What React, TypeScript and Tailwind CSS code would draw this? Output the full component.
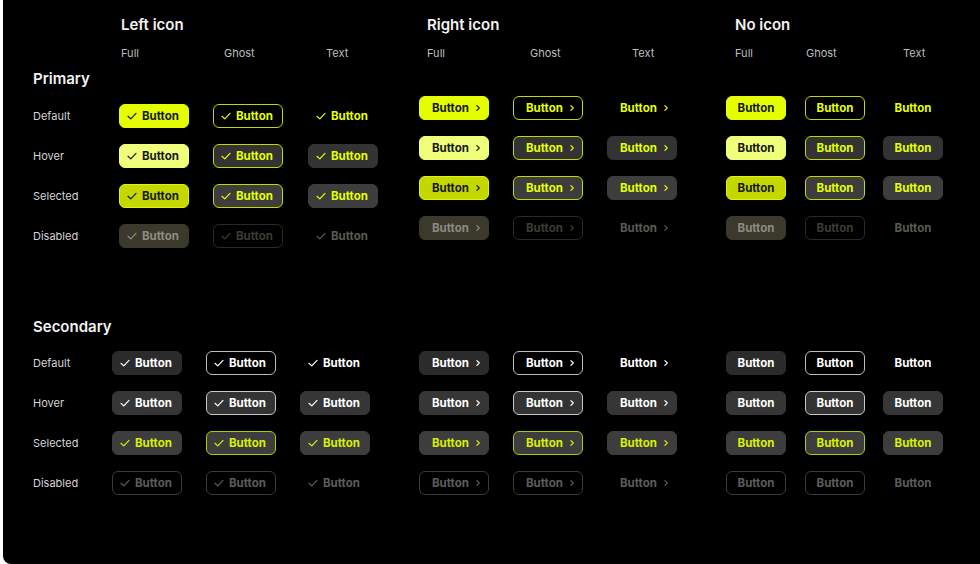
import React from 'react';

type Kind = 'primary' | 'secondary';
type Variant = 'full' | 'ghost' | 'text';
type State = 'default' | 'hover' | 'selected' | 'disabled';
type Icon = 'left' | 'right' | 'none';

const styles: Record<string, string> = {
  'primary-full-default': 'bg-[#e5ff00] border-[#e5ff00] text-[#161616]',
  'primary-full-hover': 'bg-[#f0ff7a] border-[#f0ff7a] text-[#161616]',
  'primary-full-selected': 'bg-[#c4d800] border-[#e0f500] text-[#161616]',
  'primary-full-disabled': 'bg-[#3a392b] border-[#3a392b] text-[#8c8c82]',
  'primary-ghost-default': 'bg-black border-[#c6d600] text-[#e5ff00]',
  'primary-ghost-hover': 'bg-[#333333] border-[#c6d600] text-[#e5ff00]',
  'primary-ghost-selected': 'bg-[#3d3d3d] border-[#c6d600] text-[#e5ff00]',
  'primary-ghost-disabled': 'bg-black border-[#2a2a1e] text-[#3c3c31]',
  'primary-text-default': 'bg-transparent border-transparent text-[#e5ff00]',
  'primary-text-hover': 'bg-[#333333] border-[#333333] text-[#e5ff00]',
  'primary-text-selected': 'bg-[#3d3d3d] border-[#3d3d3d] text-[#e5ff00]',
  'primary-text-disabled': 'bg-transparent border-transparent text-[#5a5a52]',
  'secondary-full-default': 'bg-[#2b2b2b] border-[#2b2b2b] text-white',
  'secondary-full-hover': 'bg-[#363636] border-[#363636] text-white',
  'secondary-full-selected': 'bg-[#3d3d3d] border-[#3d3d3d] text-[#d9f000]',
  'secondary-full-disabled': 'bg-black border-[#3a3a3a] text-[#5c5c5c]',
  'secondary-ghost-default': 'bg-black border-[#bdbdbd] text-white',
  'secondary-ghost-hover': 'bg-[#333333] border-[#c8c8c8] text-white',
  'secondary-ghost-selected': 'bg-[#3d3d3d] border-[#b4c800] text-[#d9f000]',
  'secondary-ghost-disabled': 'bg-black border-[#3a3a3a] text-[#5c5c5c]',
  'secondary-text-default': 'bg-transparent border-transparent text-white',
  'secondary-text-hover': 'bg-[#363636] border-[#363636] text-white',
  'secondary-text-selected': 'bg-[#3d3d3d] border-[#3d3d3d] text-[#d9f000]',
  'secondary-text-disabled': 'bg-transparent border-transparent text-[#5c5c5c]',
};

const Check = () => (
  <svg width="10" height="10" viewBox="0 0 10 10" fill="none" className="shrink-0">
    <path d="M1 5.3 L3.8 7.9 L9 2.4" stroke="currentColor" strokeWidth="1.2" strokeLinecap="round" strokeLinejoin="round" />
  </svg>
);

const Chevron = () => (
  <svg width="8" height="8" viewBox="0 0 10 10" fill="none" className="shrink-0">
    <path d="M3.6 2 L6.6 5 L3.6 8" stroke="currentColor" strokeWidth="1.5" strokeLinecap="round" strokeLinejoin="round" />
  </svg>
);

function Btn({ kind, variant, state, icon }: { kind: Kind; variant: Variant; state: State; icon: Icon }) {
  const layout =
    icon === 'none'
      ? 'w-[60px] justify-center'
      : icon === 'left'
        ? 'w-[70px] justify-start gap-[5px] pl-[7px]'
        : 'w-[70px] justify-start gap-[5px] pl-[12px]';
  return (
    <div className={`flex h-6 ${layout} shrink-0 items-center rounded-[6px] border text-[11.5px] font-bold leading-none ${styles[`${kind}-${variant}-${state}`]}`}>
      {icon === 'left' && <Check />}
      <span className="pt-px">Button</span>
      {icon === 'right' && <Chevron />}
    </div>
  );
}

const states: State[] = ['default', 'hover', 'selected', 'disabled'];
const labels: Record<State, string> = { default: 'Default', hover: 'Hover', selected: 'Selected', disabled: 'Disabled' };

function RightGroups({ kind, state }: { kind: Kind; state: State }) {
  return (
    <div className="flex">
      <div className="flex gap-6">
        <Btn kind={kind} variant="full" state={state} icon="right" />
        <Btn kind={kind} variant="ghost" state={state} icon="right" />
        <Btn kind={kind} variant="text" state={state} icon="right" />
      </div>
      <div className="ml-[49px] flex gap-[19px]">
        <Btn kind={kind} variant="full" state={state} icon="none" />
        <Btn kind={kind} variant="ghost" state={state} icon="none" />
        <div className="-ml-px">
          <Btn kind={kind} variant="text" state={state} icon="none" />
        </div>
      </div>
    </div>
  );
}

export default function App() {
  return (
    <div className="min-h-screen bg-white">
      <div className="ml-[3px] h-[564px] overflow-hidden rounded-bl-[8px] bg-black font-['Inter','Noto_Sans',sans-serif]">
        {/* group titles */}
        <div className="flex h-[37px] pt-[13px] text-[15px] font-semibold leading-6 text-[#f2f2f2]">
          <div className="w-[118px]" />
          <div className="w-[306px]">Left icon</div>
          <div className="w-[308px]">Right icon</div>
          <div>No icon</div>
        </div>

        {/* column labels */}
        <div className="mt-[8px] flex h-4 items-center text-[11px] text-[#bdbdbd]">
          <div className="w-[118px]" />
          <div className="w-[103px]">Full</div>
          <div className="w-[102px]">Ghost</div>
          <div className="w-[101px]">Text</div>
          <div className="w-[103px]">Full</div>
          <div className="w-[102px]">Ghost</div>
          <div className="w-[103px]">Text</div>
          <div className="w-[71px]">Full</div>
          <div className="w-[97px]">Ghost</div>
          <div>Text</div>
        </div>

        {/* Primary */}
        <div className="mt-[5px] flex">
          <div className="flex flex-col">
            <div className="h-6 pl-[30px] pt-px text-[15px] font-semibold leading-6 text-[#f2f2f2]">Primary</div>
            <div className="mt-[14px] flex flex-col gap-4">
              {states.map((s) => (
                <div key={s} className="flex h-6 items-center">
                  <div className="w-[116px] pl-[30px] pt-px text-[11px] text-[#d4d4d4]">{labels[s]}</div>
                  <Btn kind="primary" variant="full" state={s} icon="left" />
                  <div className="ml-6">
                    <Btn kind="primary" variant="ghost" state={s} icon="left" />
                  </div>
                  <div className="ml-[25px]">
                    <Btn kind="primary" variant="text" state={s} icon="left" />
                  </div>
                </div>
              ))}
            </div>
          </div>
          <div className="ml-[41px] flex flex-col gap-4 pt-[30px]">
            {states.map((s) => (
              <RightGroups key={s} kind="primary" state={s} />
            ))}
          </div>
        </div>

        {/* Secondary */}
        <div className="mt-[66px] h-6 pl-[30px] pt-px text-[15px] font-semibold leading-6 text-[#f2f2f2]">Secondary</div>
        <div className="mt-[13px] flex flex-col gap-4">
          {states.map((s) => (
            <div key={s} className="flex h-6 items-center">
              <div className="w-[109px] pl-[30px] pt-px text-[11px] text-[#d4d4d4]">{labels[s]}</div>
              <div className="flex gap-6">
                <Btn kind="secondary" variant="full" state={s} icon="left" />
                <Btn kind="secondary" variant="ghost" state={s} icon="left" />
                <Btn kind="secondary" variant="text" state={s} icon="left" />
              </div>
              <div className="ml-[49px]">
                <RightGroups kind="secondary" state={s} />
              </div>
            </div>
          ))}
        </div>
      </div>
    </div>
  );
}
